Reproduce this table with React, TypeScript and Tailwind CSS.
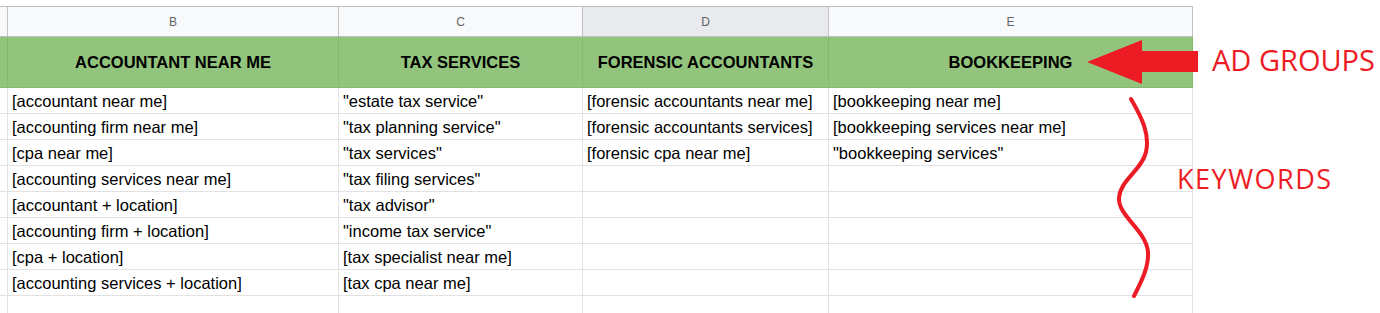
import React from "react";

const columns = [
  { letter: "B", title: "ACCOUNTANT NEAR ME", width: "w-[331px]" },
  { letter: "C", title: "TAX SERVICES", width: "w-[244px]" },
  { letter: "D", title: "FORENSIC ACCOUNTANTS", width: "w-[246px]", selected: true },
  { letter: "E", title: "BOOKKEEPING", width: "w-[364px]" },
];

const rows = [
  ["[accountant near me]", "\"estate tax service\"", "[forensic accountants near me]", "[bookkeeping near me]"],
  ["[accounting firm near me]", "\"tax planning service\"", "[forensic accountants services]", "[bookkeeping services near me]"],
  ["[cpa near me]", "\"tax services\"", "[forensic cpa near me]", "\"bookkeeping services\""],
  ["[accounting services near me]", "\"tax filing services\"", "", ""],
  ["[accountant + location]", "\"tax advisor\"", "", ""],
  ["[accounting firm + location]", "\"income tax service\"", "", ""],
  ["[cpa + location]", "[tax specialist near me]", "", ""],
  ["[accounting services + location]", "[tax cpa near me]", "", ""],
  ["", "", "", ""],
];

export default function App() {
  return (
    <div className="relative w-[1380px] h-[313px] overflow-hidden bg-white font-['Liberation_Sans',Arial,sans-serif] text-black">
      <div className="pt-[6px] w-[1193px]">
        {/* column letters */}
        <div className="flex h-[31px] border-t border-b border-[#c0c0c0] bg-[#f8f9fa]">
          <div className="w-[8px] shrink-0 border-r border-[#c0c0c0]" />
          {columns.map((c) => (
            <div
              key={c.letter}
              className={`${c.width} shrink-0 border-r border-[#c0c0c0] flex items-center justify-center text-[12px] text-[#5f6368] ${c.selected ? "bg-[#e8eaed]" : ""}`}
            >
              {c.letter}
            </div>
          ))}
        </div>

        {/* ad group header row */}
        <div className="flex h-[51px] bg-[#93c47d] border-b border-[#86b872]">
          <div className="w-[8px] shrink-0 border-r border-[#86b872]" />
          {columns.map((c) => (
            <div
              key={c.letter}
              className={`${c.width} shrink-0 border-r border-[#86b872] flex items-center justify-center text-[16.5px] font-bold`}
            >
              {c.title}
            </div>
          ))}
        </div>

        {/* keyword rows */}
        {rows.map((row, i) => (
          <div key={i} className="flex h-[26px] border-b border-[#e2e2e2]">
            <div className="w-[8px] shrink-0 border-r border-[#e2e2e2]" />
            {row.map((cell, j) => (
              <div
                key={j}
                className={`${columns[j].width} shrink-0 border-r border-[#e2e2e2] flex items-center pl-[4px] pt-[1px] text-[16.5px] whitespace-nowrap overflow-hidden`}
              >
                {cell}
              </div>
            ))}
          </div>
        ))}
      </div>

      {/* annotations */}
      <svg className="absolute left-0 top-0 pointer-events-none" width="1380" height="313">
        <polygon points="1087,62 1142,40 1142,51 1198,51 1198,72 1142,72 1142,84" fill="#ed1c24" />
        <path
          d="M1131 99 C1142 118 1150 134 1146 152 C1142 170 1120 180 1119 198 C1118 216 1146 230 1148 252 C1149 268 1140 284 1134 296"
          fill="none"
          stroke="#ed1c24"
          strokeWidth="4"
          strokeLinecap="round"
        />
      </svg>
      <div className="absolute left-[1212px] top-[42px] whitespace-nowrap text-[29px] leading-[36px] text-[#ed1c24] font-['Open_Sans',sans-serif]">
        AD GROUPS
      </div>
      <div className="absolute left-[1177px] top-[163px] whitespace-nowrap text-[27px] leading-[32px] tracking-[1.5px] text-[#ed1c24] font-['Open_Sans',sans-serif]">
        KEYWORDS
      </div>
    </div>
  );
}
